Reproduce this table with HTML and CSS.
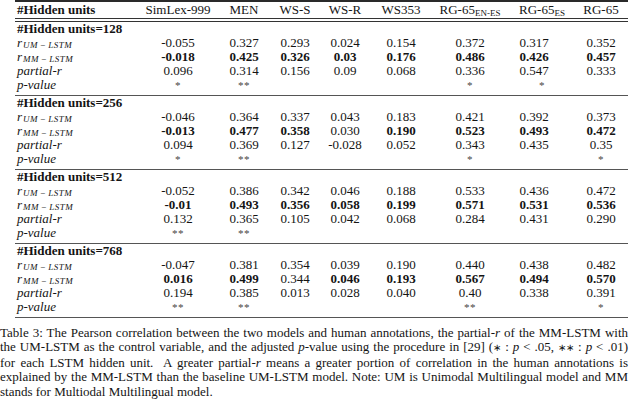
FILE: index.html
```html
<!DOCTYPE html>
<html>
<head>
<meta charset="utf-8">
<link rel="stylesheet" href="styles.css">
</head>
<body>
<div class="page">
<table class="results">
<colgroup>
<col class="c-lbl"><col class="c-sim"><col class="c-men"><col class="c-wss"><col class="c-wsr"><col class="c-ws353"><col class="c-rgenes"><col class="c-rges"><col class="c-rg">
</colgroup>
<thead>
<tr><th class="lbl">#Hidden units</th><th>SimLex-999</th><th>MEN</th><th>WS-S</th><th>WS-R</th><th>WS353</th><th>RG-65<sub>EN-ES</sub></th><th>RG-65<sub>ES</sub></th><th>RG-65</th></tr>
</thead>
<tbody>
<tr class="head"><td class="lbl grp" colspan="9">#Hidden units=128</td></tr>
<tr><td class="lbl"><i class="r">r</i><sub class="ms">UM − LSTM</sub></td><td>-0.055</td><td>0.327</td><td>0.293</td><td>0.024</td><td>0.154</td><td>0.372</td><td class="es">0.317</td><td>0.352</td></tr>
<tr><td class="lbl"><i class="r">r</i><sub class="ms">MM − LSTM</sub></td><td><b>-0.018</b></td><td><b>0.425</b></td><td><b>0.326</b></td><td><b>0.03</b></td><td><b>0.176</b></td><td><b>0.486</b></td><td class="es"><b>0.426</b></td><td><b>0.457</b></td></tr>
<tr><td class="lbl"><i>partial-r</i></td><td>0.096</td><td>0.314</td><td>0.156</td><td>0.09</td><td>0.068</td><td>0.336</td><td class="es">0.547</td><td>0.333</td></tr>
<tr class="pv"><td class="lbl"><i>p-value</i></td><td class="st">*</td><td class="st">**</td><td></td><td></td><td></td><td class="st">*</td><td class="st">*</td><td></td></tr>
</tbody>
<tbody>
<tr class="head"><td class="lbl grp" colspan="9">#Hidden units=256</td></tr>
<tr><td class="lbl"><i class="r">r</i><sub class="ms">UM − LSTM</sub></td><td>-0.046</td><td>0.364</td><td>0.337</td><td>0.043</td><td>0.183</td><td>0.421</td><td class="es">0.392</td><td>0.373</td></tr>
<tr><td class="lbl"><i class="r">r</i><sub class="ms">MM − LSTM</sub></td><td><b>-0.013</b></td><td><b>0.477</b></td><td><b>0.358</b></td><td>0.030</td><td><b>0.190</b></td><td><b>0.523</b></td><td class="es"><b>0.493</b></td><td><b>0.472</b></td></tr>
<tr><td class="lbl"><i>partial-r</i></td><td>0.094</td><td>0.369</td><td>0.127</td><td>-0.028</td><td>0.052</td><td>0.343</td><td class="es">0.435</td><td>0.35</td></tr>
<tr class="pv"><td class="lbl"><i>p-value</i></td><td class="st">*</td><td class="st">**</td><td></td><td></td><td></td><td class="st">*</td><td></td><td class="st">*</td></tr>
</tbody>
<tbody>
<tr class="head"><td class="lbl grp" colspan="9">#Hidden units=512</td></tr>
<tr><td class="lbl"><i class="r">r</i><sub class="ms">UM − LSTM</sub></td><td>-0.052</td><td>0.386</td><td>0.342</td><td>0.046</td><td>0.188</td><td>0.533</td><td class="es">0.436</td><td>0.472</td></tr>
<tr><td class="lbl"><i class="r">r</i><sub class="ms">MM − LSTM</sub></td><td><b>-0.01</b></td><td><b>0.493</b></td><td><b>0.356</b></td><td><b>0.058</b></td><td><b>0.199</b></td><td><b>0.571</b></td><td class="es"><b>0.531</b></td><td><b>0.536</b></td></tr>
<tr><td class="lbl"><i>partial-r</i></td><td>0.132</td><td>0.365</td><td>0.105</td><td>0.042</td><td>0.068</td><td>0.284</td><td class="es">0.431</td><td>0.290</td></tr>
<tr class="pv"><td class="lbl"><i>p-value</i></td><td class="st">**</td><td class="st">**</td><td></td><td></td><td></td><td></td><td></td><td></td></tr>
</tbody>
<tbody>
<tr class="head"><td class="lbl grp" colspan="9">#Hidden units=768</td></tr>
<tr><td class="lbl"><i class="r">r</i><sub class="ms">UM − LSTM</sub></td><td>-0.047</td><td>0.381</td><td>0.354</td><td>0.039</td><td>0.190</td><td>0.440</td><td class="es">0.438</td><td>0.482</td></tr>
<tr><td class="lbl"><i class="r">r</i><sub class="ms">MM − LSTM</sub></td><td><b>0.016</b></td><td><b>0.499</b></td><td>0.344</td><td><b>0.046</b></td><td><b>0.193</b></td><td><b>0.567</b></td><td class="es"><b>0.494</b></td><td><b>0.570</b></td></tr>
<tr><td class="lbl"><i>partial-r</i></td><td>0.194</td><td>0.385</td><td>0.013</td><td>0.028</td><td>0.040</td><td>0.40</td><td class="es">0.338</td><td>0.391</td></tr>
<tr class="pv"><td class="lbl"><i>p-value</i></td><td class="st">**</td><td class="st">**</td><td></td><td></td><td></td><td class="st">**</td><td></td><td class="st">*</td></tr>
</tbody>
</table>
<div class="caption">
<span class="line">Table 3: The Pearson correlation between the two models and human annotations, the partial-<i>r</i> of the MM-LSTM with</span>
<span class="line">the UM-LSTM as the control variable, and the adjusted <i>p</i>-value using the procedure in [29] (<span class="ast">∗</span> : <i>p</i> &lt; .05, <span class="ast">∗∗</span> : <i>p</i> &lt; .01)</span>
<span class="line">for each LSTM hidden unit.&nbsp; A greater partial-<i>r</i> means a greater portion of correlation in the human annotations is</span>
<span class="line">explained by the MM-LSTM than the baseline UM-LSTM model. Note: UM is Unimodal Multilingual model and MM</span>
<span class="line last">stands for Multiodal Multilingual model.</span>
</div>
</div>
</body>
</html>
```

FILE: styles.css
```css
html, body {
  margin: 0;
  padding: 0;
  background: #ffffff;
}

body {
  color: #141414;
  font-family: "Liberation Serif", "Times New Roman", serif;
  font-size: 13px;
}

.page {
  width: 628px;
}

.results {
  margin-left: 15px;
  width: 613px;
  table-layout: fixed;
  border-collapse: collapse;
  border-top: 2px solid #2a2a2a;
  border-bottom: 1px solid #555;
}

.c-lbl { width: 125px; }
.c-sim { width: 76px; }
.c-men { width: 56px; }
.c-wss { width: 46px; }
.c-wsr { width: 54px; }
.c-ws353 { width: 58px; }
.c-rgenes { width: 80px; }
.c-rges { width: 64px; }
.c-rg { width: 54px; }

.results th,
.results td {
  padding: 0;
  text-align: center;
  white-space: nowrap;
  line-height: 14px;
  height: 14px;
  vertical-align: middle;
}

.results thead th {
  font-weight: normal;
  height: 16px;
  line-height: 16px;
  border-bottom: 4px double #333;
}

.results thead th.lbl {
  font-weight: bold;
}

.results th sub {
  font-size: 9px;
  line-height: 0;
  vertical-align: -2px;
}

.results .lbl {
  text-align: left;
  padding-left: 2px;
}

.results tbody + tbody {
  border-top: 1px solid #555;
}

.results .grp {
  font-weight: bold;
}

.results tbody tr.pv td {
  padding-bottom: 3px;
}

.results td.es {
  padding-right: 16px;
}

.results td.st {
  font-size: 11px;
  color: #444;
  letter-spacing: 0.5px;
}

.r {
  font-size: 13px;
}

.ms {
  font-style: italic;
  font-size: 9px;
  line-height: 0;
  vertical-align: -1px;
  letter-spacing: 0.5px;
  word-spacing: -1px;
  margin-left: 1px;
}

.caption {
  margin-top: 8px;
  line-height: 14.4px;
}

.caption .line {
  display: block;
  white-space: nowrap;
  text-align: justify;
  text-align-last: justify;
}

.caption .line.last {
  text-align-last: left;
}

.caption .ast {
  font-size: 10px;
}
```
